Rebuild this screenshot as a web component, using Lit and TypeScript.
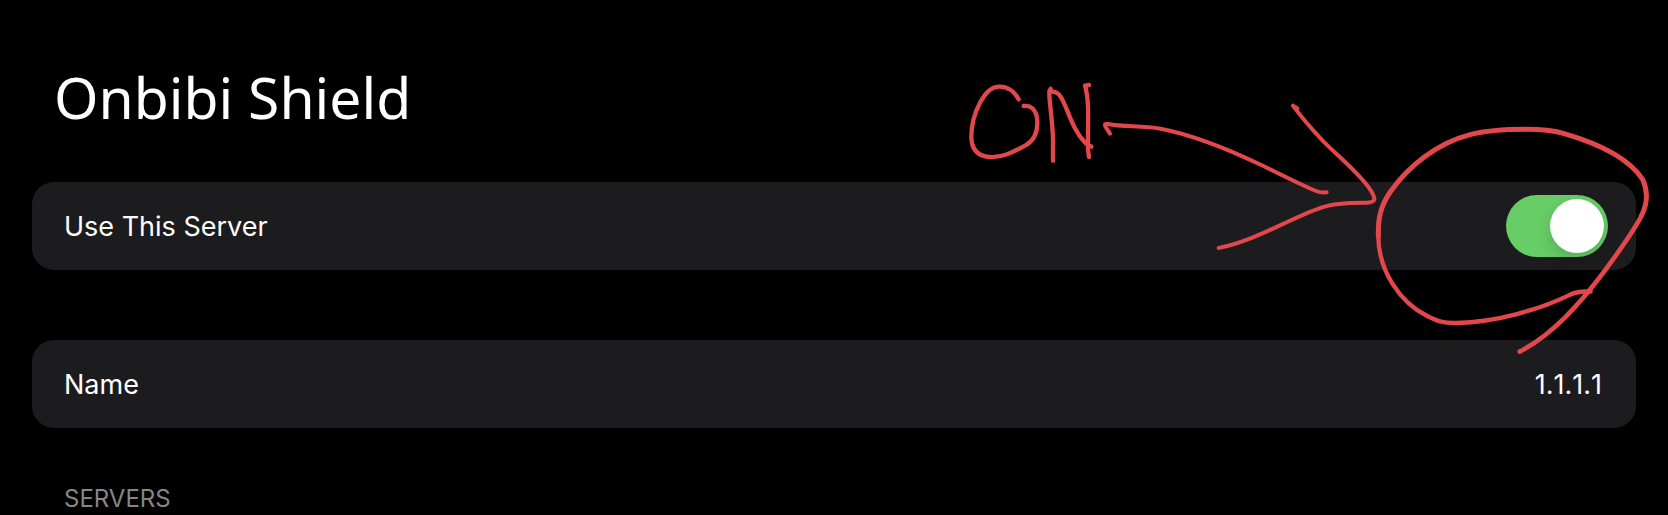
import { LitElement, html, css } from "lit";
import { customElement, state } from "lit/decorators.js";

@customElement("app-root")
export class AppRoot extends LitElement {
  static styles = css`
    :host {
      display: block;
      position: relative;
      box-sizing: border-box;
      min-height: 100vh;
      padding: 55px 32px 0;
      overflow: hidden;
      background: #000;
      color: #fff;
      font-family: Inter, "Liberation Sans", sans-serif;
      font-size: 27px;
      line-height: 40px;
    }
    .title {
      margin: 0 0 43px;
      padding-left: 22px;
      font: 400 57px/84px "Noto Sans", "Open Sans", sans-serif;
    }
    .card {
      display: flex;
      align-items: center;
      justify-content: space-between;
      gap: 32px;
      height: 88px;
      margin-bottom: 70px;
      padding: 0 32px;
      border-radius: 22px;
      background: #1c1c1e;
    }
    .card label {
      padding-top: 2px;
    }
    .switch {
      appearance: none;
      flex: none;
      width: 102px;
      height: 62px;
      margin: 0 -4px 0 0;
      padding: 4px;
      border-radius: 31px;
      background: #39393d;
      cursor: pointer;
    }
    .switch::before {
      content: "";
      display: block;
      width: 54px;
      height: 54px;
      border-radius: 50%;
      background: #fff;
      box-shadow: 0 6px 16px rgba(0, 0, 0, 0.16);
    }
    .switch:checked {
      background: #67ce67;
    }
    .switch:checked::before {
      margin-left: 40px;
    }
    .value {
      flex: 1;
      min-width: 0;
      padding: 2px 2px 0 0;
      border: 0;
      outline: 0;
      background: none;
      color: inherit;
      font: inherit;
      font-kerning: none;
      font-feature-settings: "calt" 0;
      text-align: right;
    }
    .section {
      margin: -15px 0 0;
      padding-left: 32px;
      color: #868688;
      font-size: 24px;
      font-weight: 400;
      line-height: 32px;
    }
    .ink {
      position: absolute;
      top: 60px;
      right: 0;
      width: 728px;
      height: 310px;
      pointer-events: none;
      fill: none;
      stroke: #e2474c;
      stroke-linecap: round;
      stroke-linejoin: round;
    }
  `;

  @state() private enabled = true;
  @state() private name = "1.1.1.1";

  render() {
    return html`
      <h1 class="title">Onbibi Shield</h1>
      <div class="card">
        <label for="use">Use This Server</label>
        <input
          id="use"
          class="switch"
          type="checkbox"
          role="switch"
          .checked=${this.enabled}
          @change=${(e: Event) => (this.enabled = (e.target as HTMLInputElement).checked)}
        />
      </div>
      <div class="card">
        <label for="name">Name</label>
        <input
          id="name"
          class="value"
          type="text"
          .value=${this.name}
          @input=${(e: Event) => (this.name = (e.target as HTMLInputElement).value)}
        />
      </div>
      <h2 class="section">SERVERS</h2>
      <svg class="ink" viewBox="0 0 2184 930" aria-hidden="true">
        <g stroke-width="13">
          <path d="M236 118C222 92 204 79 176 80C151 82 136 100 120 128C102 162 93 196 94 235C96 270 114 288 148 291C192 294 226 272 260 254C282 240 292 216 292 188C292 156 278 135 251 138" />
          <path d="M339 302L339 240C338 180 326 116 328 94L332 86M332 94C352 94 360 104 371 127C390 168 402 214 437 250L454 260" />
          <path d="M447 75L435 77C446 114 445 160 444 220L444 270L447 291" />
        </g>
        <g stroke-width="12">
          <path d="M510 221L496 199C493 191 497 191 504 192C552 202 604 195 662 206C770 227 870 270 964 315C1020 342 1082 374 1128 393C1140 398 1148 398 1160 397" />
          <path d="M1072 145L1059 137C1080 166 1112 204 1150 244C1198 292 1250 334 1286 382C1296 396 1302 406 1303 416C1303 426 1286 428 1270 428C1226 428 1180 430 1146 442C1050 474 944 544 836 564" />
        </g>
        <g transform="translate(1200 150)">
          <path stroke-width="13" d="M752 545C722 543 706 545 686 556C600 598 470 636 350 639C310 640 294 634 262 618C180 578 116 482 115 380C114 326 120 290 152 244" />
          <path stroke-width="15" d="M115 380C114 326 120 290 152 244C206 168 290 100 390 74C444 60 500 58 560 58C610 58 634 60 670 70C774 100 866 144 908 208C924 244 923 280 905 316" />
          <path stroke-width="14" d="M905 316C884 360 830 434 790 488C716 586 636 674 539 725" />
        </g>
      </svg>
    `;
  }
}
